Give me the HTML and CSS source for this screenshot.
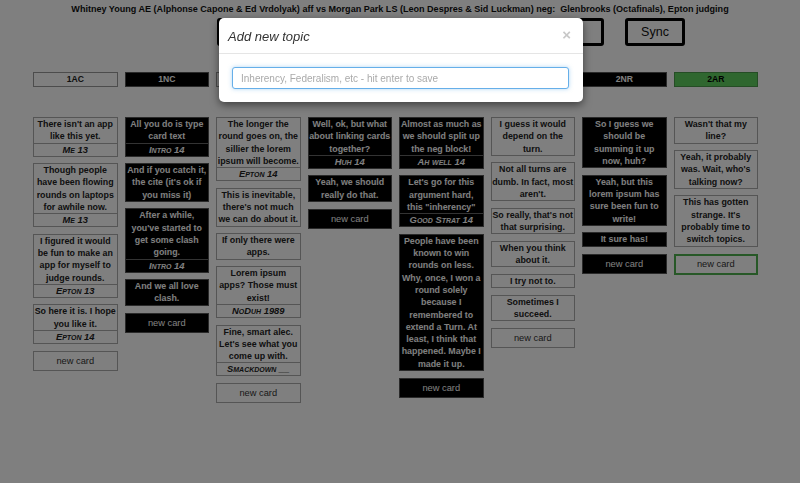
FILE: index.html
```html
<!DOCTYPE html>
<html>
<head>
<meta charset="utf-8">
<link rel="stylesheet" href="styles.css">
</head>
<body>
<div class="page">
  <h1 class="title">Whitney Young AE (Alphonse Capone &amp; Ed Vrdolyak) aff vs Morgan Park LS (Leon Despres &amp; Sid Luckman) neg:&nbsp; Glenbrooks (Octafinals), Epton judging</h1>
  <div class="toolbar">
    <button class="btn btn-wide">New topic</button>
    <button class="btn">Sync</button>
  </div>
  <div class="board">
    <div class="col">
      <div class="head">1AC</div>
      <div class="card"><div class="txt">There isn't an app like this yet.</div><div class="cite">Me 13</div></div>
      <div class="card"><div class="txt">Though people have been flowing rounds on laptops for awhile now.</div><div class="cite">Me 13</div></div>
      <div class="card"><div class="txt">I figured it would be fun to make an app for myself to judge rounds.</div><div class="cite">Epton 13</div></div>
      <div class="card"><div class="txt">So here it is. I hope you like it.</div><div class="cite">Epton 14</div></div>
      <div class="newcard">new card</div>
    </div>
    <div class="col dark">
      <div class="head">1NC</div>
      <div class="card"><div class="txt">All you do is type card text</div><div class="cite">Intro 14</div></div>
      <div class="card"><div class="txt">And if you catch it, the cite (it's ok if you miss it)</div></div>
      <div class="card"><div class="txt">After a while, you've started to get some clash going.</div><div class="cite">Intro 14</div></div>
      <div class="card"><div class="txt">And we all love clash.</div></div>
      <div class="newcard">new card</div>
    </div>
    <div class="col">
      <div class="head">2AC</div>
      <div class="card"><div class="txt">The longer the round goes on, the sillier the lorem ipsum will become.</div><div class="cite">Epton 14</div></div>
      <div class="card"><div class="txt">This is inevitable, there's not much we can do about it.</div></div>
      <div class="card"><div class="txt">If only there were apps.</div></div>
      <div class="card"><div class="txt">Lorem ipsum apps? Those must exist!</div><div class="cite">NoDuh 1989</div></div>
      <div class="card"><div class="txt">Fine, smart alec. Let's see what you come up with.</div><div class="cite">Smackdown __</div></div>
      <div class="newcard">new card</div>
    </div>
    <div class="col dark">
      <div class="head">2NC</div>
      <div class="card"><div class="txt">Well, ok, but what about linking cards together?</div><div class="cite">Huh 14</div></div>
      <div class="card"><div class="txt">Yeah, we should really do that.</div></div>
      <div class="newcard">new card</div>
    </div>
    <div class="col dark">
      <div class="head">1NR</div>
      <div class="card"><div class="txt">Almost as much as we should split up the neg block!</div><div class="cite">Ah well 14</div></div>
      <div class="card"><div class="txt">Let's go for this argument hard, this "inherency"</div><div class="cite">Good Strat 14</div></div>
      <div class="card"><div class="txt">People have been known to win rounds on less. Why, once, I won a round solely because I remembered to extend a Turn. At least, I think that happened. Maybe I made it up.</div></div>
      <div class="newcard">new card</div>
    </div>
    <div class="col">
      <div class="head">1AR</div>
      <div class="card"><div class="txt">I guess it would depend on the turn.</div></div>
      <div class="card"><div class="txt">Not all turns are dumb. In fact, most aren't.</div></div>
      <div class="card"><div class="txt">So really, that's not that surprising.</div></div>
      <div class="card"><div class="txt">When you think about it.</div></div>
      <div class="card"><div class="txt">I try not to.</div></div>
      <div class="card"><div class="txt">Sometimes I succeed.</div></div>
      <div class="newcard">new card</div>
    </div>
    <div class="col dark">
      <div class="head">2NR</div>
      <div class="card"><div class="txt">So I guess we should be summing it up now, huh?</div></div>
      <div class="card"><div class="txt">Yeah, but this lorem ipsum has sure been fun to write!</div></div>
      <div class="card"><div class="txt">It sure has!</div></div>
      <div class="newcard">new card</div>
    </div>
    <div class="col active">
      <div class="head">2AR</div>
      <div class="card"><div class="txt">Wasn't that my line?</div></div>
      <div class="card"><div class="txt">Yeah, it probably was. Wait, who's talking now?</div></div>
      <div class="card"><div class="txt">This has gotten strange. It's probably time to switch topics.</div></div>
      <div class="newcard">new card</div>
    </div>
  </div>
</div>
<div class="backdrop"></div>
<div class="modal">
  <div class="modal-header">
    <span class="modal-title">Add new topic</span>
    <span class="close">×</span>
  </div>
  <div class="modal-body">
    <input class="topic-input" type="text" placeholder="Inherency, Federalism, etc - hit enter to save">
  </div>
</div>
</body>
</html>
```
FILE: styles.css
```css
html, body {
  margin: 0;
  padding: 0;
  background: #fff;
}
body {
  font-family: "Liberation Sans", Arial, Helvetica, sans-serif;
  color: #222;
  width: 800px;
  height: 483px;
  overflow: hidden;
}
.page {
  position: relative;
}
.title {
  margin: 0;
  padding-top: 3px;
  font-size: 9.05px;
  line-height: 12px;
  font-weight: bold;
  text-align: center;
  color: #111;
}
.toolbar {
  display: flex;
  gap: 21px;
  padding-left: 217px;
  margin-top: 3px;
}
.btn {
  box-sizing: border-box;
  height: 28px;
  width: 60px;
  border: 3px solid #000;
  border-radius: 3px;
  background: #fff;
  font-family: "Liberation Sans", Arial, sans-serif;
  font-size: 12.5px;
  color: #111;
  padding: 0;
}
.btn-wide {
  width: 387px;
}
.board {
  display: grid;
  grid-template-columns: repeat(8, 1fr);
  column-gap: 7px;
  width: 725px;
  margin-left: 33px;
  margin-top: 26px;
  align-items: start;
}
.col {
  display: flex;
  flex-direction: column;
  gap: 6.5px;
}
.head {
  box-sizing: border-box;
  height: 15px;
  border: 1px solid #999;
  font-size: 8.6px;
  line-height: 13px;
  font-weight: bold;
  text-align: center;
  margin-bottom: 23.5px;
}
.card {
  border: 1px solid #aaa;
  text-align: center;
  font-weight: bold;
}
.txt {
  font-size: 8.85px;
  line-height: 12.3px;
  padding: 0;
}
.cite {
  border-top: 1px solid #aaa;
  font-size: 9.4px;
  line-height: 12px;
  font-style: italic;
  font-variant: small-caps;
}
.newcard {
  box-sizing: border-box;
  height: 20px;
  border: 1px solid #aaa;
  font-size: 9.3px;
  line-height: 18px;
  text-align: center;
  color: #333;
  margin-top: 0.5px;
}
.dark .head,
.dark .card,
.dark .newcard {
  background: #000;
  color: #fff;
  border-color: #555;
}
.dark .cite {
  border-top-color: #666;
}
.active .head {
  background: #5fcf5f;
  border-color: #4a9a4a;
  color: #000;
}
.active .newcard {
  border: 2px solid #4fb04f;
  line-height: 16px;
  height: 21px;
}
.backdrop {
  position: fixed;
  inset: 0;
  background: rgba(0, 0, 0, 0.5);
}
.modal {
  position: absolute;
  left: 219px;
  top: 18px;
  width: 364px;
  height: 84px;
  background: #fff;
  border-radius: 5px;
  box-shadow: 0 3px 9px rgba(0, 0, 0, 0.5);
  font-family: "Liberation Sans", Arial, sans-serif;
}
.modal-header {
  display: flex;
  justify-content: space-between;
  align-items: center;
  height: 35px;
  padding: 0 12px 0 9px;
  border-bottom: 1px solid #e5e5e5;
}
.modal-title {
  font-size: 13px;
  font-style: italic;
  color: #333;
  padding-top: 1px;
}
.close {
  font-size: 15px;
  font-weight: bold;
  color: #c8c8c8;
  margin-top: -2px;
}
.modal-body {
  padding: 13px 13px 0 13px;
}
.topic-input {
  box-sizing: border-box;
  width: 337px;
  height: 22px;
  border: 1px solid #66afe9;
  border-radius: 3px;
  box-shadow: 0 0 4px rgba(102, 175, 233, 0.5);
  padding: 0 8px;
  font-family: "Liberation Sans", Arial, sans-serif;
  font-size: 10px;
  outline: none;
}
.topic-input::placeholder {
  color: #aaa;
}
```
